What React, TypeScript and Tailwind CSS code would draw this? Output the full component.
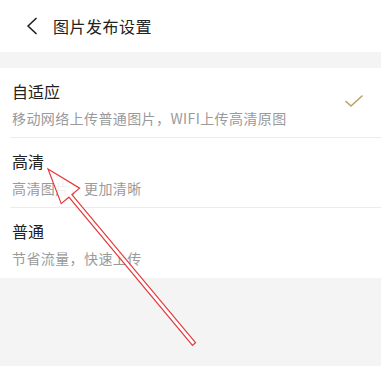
import React from "react";

interface Option { title: string; desc: string; checked?: boolean; }

const options: Option[] = [
  { title: "自适应", desc: "移动网络上传普通图片，WIFI上传高清原图", checked: true },
  { title: "高清", desc: "高清图片，更加清晰" },
  { title: "普通", desc: "节省流量，快速上传" },
];

const font = { fontFamily: '"Noto Sans CJK SC", "Noto Sans", sans-serif' };

const App = () => {
  return (
    <main className="relative w-[381px] h-[366px] bg-[#f4f4f4] overflow-hidden" style={font}>
      <header className="h-[52px] bg-white flex items-center">
        <svg className="ml-[26px] w-[12px] h-[18px]" viewBox="0 0 12 18" fill="none">
          <path d="M10 1.5 L2 9 L10 16.5" stroke="#222" strokeWidth="1.7" strokeLinecap="round" strokeLinejoin="round" />
        </svg>
        <h1 className="ml-[15px] text-[16px] leading-none text-[#222] tracking-[0.5px]">图片发布设置</h1>
      </header>

      <div className="mt-[16px] bg-white">
        {options.map((o, i) => (
          <div
            key={o.title}
            className={`h-[70px] ml-[10px] pl-[2px] pr-[19px] flex items-center ${i < options.length - 1 ? "border-b border-[#ececec]" : ""}`}
          >
            <div className="flex-1 h-full flex flex-col pt-[12px]">
              <div className="text-[16px] leading-[22px] text-[#222]">{o.title}</div>
              <div className="mt-[6px] text-[14px] leading-[20px] text-[#9a9a9a] tracking-[0.4px]">{o.desc}</div>
            </div>
            {o.checked && (
              <svg className="w-[18px] h-[14px] -mr-[1px] mb-[4px]" viewBox="0 0 18 14" fill="none">
                <path d="M1 7.5 L6 12 L17 2" stroke="#b7a462" strokeWidth="1.6" strokeLinecap="round" strokeLinejoin="round" />
              </svg>
            )}
          </div>
        ))}
      </div>

      <svg className="absolute left-0 top-0 w-[381px] h-[366px] pointer-events-none" viewBox="0 0 381 366">
        <polygon
          points="48,169 79.6,188.2 71.9,194.6 195.5,342.7 192.5,345.3 68.9,197.2 61.2,203.6"
          fill="#ffffff"
          fillOpacity="0.85"
          stroke="#e5383b"
          strokeWidth="1.2"
          strokeLinejoin="miter"
        />
      </svg>
    </main>
  );
};

export default App;
